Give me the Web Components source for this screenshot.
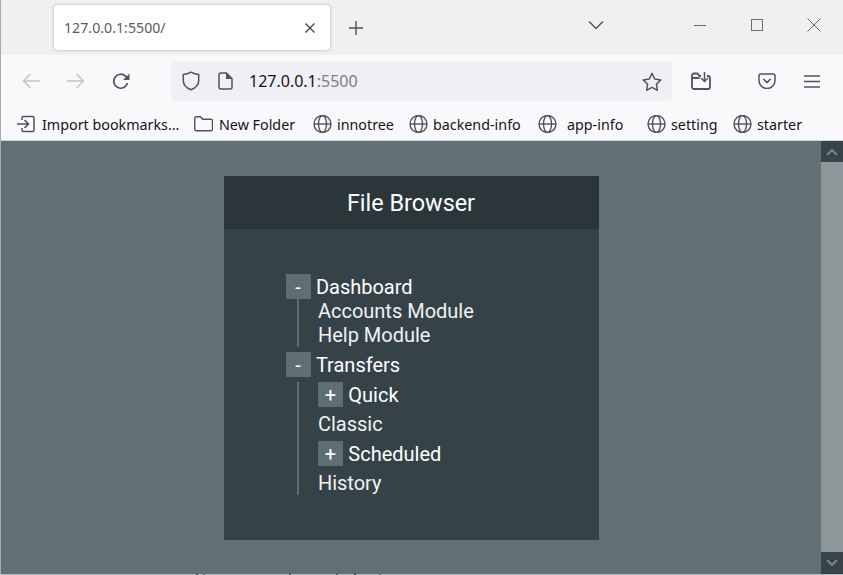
<!DOCTYPE html>
<html>
<head>
<meta charset="utf-8">
<title>File Browser</title>
<style>
  html, body { margin: 0; height: 100%; overflow: hidden; }
  body { font-family: "Noto Sans", sans-serif; }
</style>
</head>
<body>
<browser-window>
  <tab-strip slot="chrome" title-text="127.0.0.1:5500/"></tab-strip>
  <nav-bar slot="chrome" host-text="127.0.0.1" port-text=":5500"></nav-bar>
  <bookmark-bar slot="chrome">
    <bookmark-item icon="import" width="177" gap="6" label="Import bookmarks..."></bookmark-item>
    <bookmark-item icon="folder" width="119" gap="6" label="New Folder"></bookmark-item>
    <bookmark-item icon="globe" width="96" label="innotree"></bookmark-item>
    <bookmark-item icon="globe" width="129" label="backend-info"></bookmark-item>
    <bookmark-item icon="globe" width="109" gap="10" label="app-info"></bookmark-item>
    <bookmark-item icon="globe" width="86" label="setting"></bookmark-item>
    <bookmark-item icon="globe" width="67" label="starter"></bookmark-item>
  </bookmark-bar>
  <file-browser heading="File Browser">
    <tree-node label="Dashboard" sign="-">
      <tree-leaf>Accounts Module</tree-leaf>
      <tree-leaf>Help Module</tree-leaf>
    </tree-node>
    <tree-node label="Transfers" sign="-" spaced>
      <tree-node label="Quick" sign="+" closed></tree-node>
      <tree-leaf>Classic</tree-leaf>
      <tree-node label="Scheduled" sign="+" closed></tree-node>
      <tree-leaf>History</tree-leaf>
    </tree-node>
  </file-browser>
</browser-window>

<script>
const ICONS = {
  import: '<path d="M0 9h11M7.500 5 11.500 9 7.500 13" fill="none" stroke="#52525e" stroke-width="1.700"/><path d="M5 5V3A1.500 1.500 0 0 1 6.500 1.500h9A1.500 1.500 0 0 1 17 3v12a1.500 1.500 0 0 1-1.500 1.500h-9A1.500 1.500 0 0 1 5 15V13" fill="none" stroke="#52525e" stroke-width="1.500"/>',
  folder: '<path d="M.700 14v-10.500A1.800 1.800 0 0 1 2.500 1.700h4l2.200 2.500h8a1.800 1.800 0 0 1 1.800 1.800v8a1.800 1.800 0 0 1-1.800 1.800H2.500A1.800 1.800 0 0 1 .700 14z" fill="none" stroke="#52525e" stroke-width="1.400"/>',
  globe: '<g fill="none" stroke="#52525e" stroke-width="1.400"><circle cx="9.500" cy="9" r="8.500"/><ellipse cx="9.500" cy="9" rx="4" ry="8.500"/><path d="M1 9h17"/></g>'
}

class BrowserWindow extends HTMLElement {
  constructor() {
    super()
    this.attachShadow({ mode: 'open' })
    this.shadowRoot.innerHTML = `
      <style>
        :host {
          display: flex;
          flex-direction: column;
          width: 843px;
          height: 575px;
          box-sizing: border-box;
          border-left: 1px solid #a9a9a9;
          background: #f9f9fb;
        }
        .page {
          flex: 1;
          display: flex;
          min-height: 0;
          border-top: 1px solid #d4d4d8;
        }
        .view {
          flex: 1;
          display: flex;
          flex-direction: column;
          align-items: center;
          padding-top: 35px;
          background: #607074;
        }
        .bar {
          width: 22px;
          display: flex;
          flex-direction: column;
          background: #8e989a;
        }
        .arrow {
          height: 21px;
          background: #37444a;
          display: flex;
          align-items: center;
          justify-content: center;
        }
        .arrow.down { height: 22px; margin-top: auto; }
        .crumbs {
          height: 1px;
          background-color: #b5bbbc;
          background-image:
            linear-gradient(#3f3a6e, #3f3a6e), linear-gradient(#8a6a3a, #8a6a3a),
            linear-gradient(#4a4aa8, #4a4aa8), linear-gradient(#4a4aa8, #4a4aa8),
            linear-gradient(#333, #333), linear-gradient(#8a6a3a, #8a6a3a);
          background-repeat: no-repeat;
          background-size: 2px 1px;
          background-position: 195px 0, 202px 0, 288px 0, 335px 0, 353px 0, 378px 0;
        }
      </style>
      <slot name="chrome"></slot>
      <div class="page">
        <div class="view"><slot></slot></div>
        <div class="bar">
          <div class="arrow"><svg width="12" height="8"><path d="M1 7l5-5 5 5" fill="none" stroke="#77838a" stroke-width="2.200"/></svg></div>
          <div class="arrow down"><svg width="12" height="8"><path d="M1 1l5 5 5-5" fill="none" stroke="#77838a" stroke-width="2.200"/></svg></div>
        </div>
      </div>
      <div class="crumbs"></div>
    `
  }
}

class TabStrip extends HTMLElement {
  constructor() {
    super()
    this.attachShadow({ mode: 'open' })
  }

  connectedCallback() {
    this.shadowRoot.innerHTML = `
      <style>
        :host {
          display: flex;
          height: 55px;
          box-sizing: border-box;
          padding: 5px 0 5px 53px;
          background: #f0f0f0;
          color: #5b5b66;
        }
        .tab {
          width: 276px;
          height: 45px;
          box-sizing: border-box;
          padding: 0 14px 0 10px;
          display: flex;
          align-items: center;
          justify-content: space-between;
          background: #fff;
          border-radius: 4px;
          box-shadow: 0 0 3px rgba(0, 0, 0, .3);
          font-size: 14.200px;
        }
        svg { display: block; flex: none; }
        .plus { margin: 15px 0 0 18px; }
        .right {
          margin-left: auto;
          display: flex;
          align-items: center;
          height: 45px;
        }
      </style>
      <div class="tab">
        <span>${this.getAttribute('title-text')}</span>
        <svg width="12" height="12"><path d="M1.500 1.500l9 9M10.500 1.500l-9 9" stroke="#3f3f48" stroke-width="1.300"/></svg>
      </div>
      <svg class="plus" width="16" height="16"><path d="M8 1v14M1 8h14" stroke="#52525e" stroke-width="1.400"/></svg>
      <div class="right">
        <svg width="16" height="10" style="margin-right:90px;margin-bottom:5px"><path d="M1 1.500l7 7 7-7" fill="none" stroke="#52525e" stroke-width="1.500"/></svg>
        <svg width="12" height="12" style="margin-right:45px;margin-bottom:5px"><path d="M0 6.500h12" stroke="#6b6b6b"/></svg>
        <svg width="12" height="12" style="margin-right:44px;margin-bottom:5px"><rect x=".5" y=".5" width="11" height="11" fill="none" stroke="#6b6b6b"/></svg>
        <svg width="14" height="14" style="margin-right:22px;margin-bottom:5px"><path d="M.500.500l13 13M13.500.500l-13 13" stroke="#6b6b6b"/></svg>
      </div>
    `
  }
}

class NavBar extends HTMLElement {
  constructor() {
    super()
    this.attachShadow({ mode: 'open' })
  }

  connectedCallback() {
    this.shadowRoot.innerHTML = `
      <style>
        :host {
          display: flex;
          align-items: center;
          height: 55px;
          box-sizing: border-box;
          padding: 0 0 3px 21px;
          background: #f9f9fb;
        }
        svg { display: block; flex: none; }
        .url {
          width: 501px;
          height: 40px;
          margin: 0 19px 0 41px;
          padding: 0 10px 0 11px;
          box-sizing: border-box;
          display: flex;
          align-items: center;
          background: #f0f0f4;
          border-radius: 4px;
          font-size: 16px;
          color: #15141a;
        }
        .url span span { color: #7d7d85; }
        .star { margin-left: auto; }
      </style>
      <svg width="18" height="16" style="margin-right:27px"><path d="M18 8H1.500M8.500 1l-7 7 7 7" fill="none" stroke="#c2c2c7" stroke-width="1.400"/></svg>
      <svg width="18" height="16" style="margin-right:27px"><path d="M0 8h16.500M9.500 1l7 7-7 7" fill="none" stroke="#c2c2c7" stroke-width="1.400"/></svg>
      <svg width="18" height="18"><path d="M15.500 11a7 7 0 1 1-1.800-6.700L16.500 7" fill="none" stroke="#52525e" stroke-width="1.700"/><path d="M17.500 1.500V8H11z" fill="#52525e"/></svg>
      <div class="url">
        <svg width="18" height="20" style="margin-right:18px"><path d="M9 1.200C6.500 2.700 4 3.300 1.300 3.500v6c0 4 3 7.500 7.700 9.300 4.700-1.800 7.700-5.300 7.700-9.300v-6C14 3.300 11.500 2.700 9 1.200z" fill="none" stroke="#52525e" stroke-width="1.500"/></svg>
        <svg width="15" height="18" style="margin-right:16px"><path d="M1 3a2 2 0 0 1 2-2h5.500L14 6.500V15a2 2 0 0 1-2 2H3a2 2 0 0 1-2-2z" fill="none" stroke="#52525e" stroke-width="1.500"/><path d="M8 1v6h6z" fill="#52525e"/></svg>
        <span>${this.getAttribute('host-text')}<span>${this.getAttribute('port-text')}</span></span>
        <svg class="star" width="20" height="19"><path d="M10 1.300l2.700 5.700 6.100.9-4.400 4.300 1 6.100L10 15.400l-5.400 2.900 1-6.100-4.400-4.300 6.100-.9z" fill="none" stroke="#52525e" stroke-width="1.500" stroke-linejoin="round"/></svg>
      </div>
      <svg width="20" height="18" style="margin-right:47px"><path d="M1 15V3.500a2 2 0 0 1 2-2h3.500l2 2.500H10M1 6h7.500" fill="none" stroke="#52525e" stroke-width="1.800"/><path d="M13.500 0v9.500M10 6l3.500 3.500L17 6" fill="none" stroke="#52525e" stroke-width="1.500"/><path d="M16 4h1a2 2 0 0 1 2 2v9a2 2 0 0 1-2 2H3a2 2 0 0 1-2-2" fill="none" stroke="#52525e" stroke-width="1.800"/></svg>
      <svg width="18" height="16" style="margin-right:28px"><path d="M1 3A2 2 0 0 1 3 1h12a2 2 0 0 1 2 2v4.500a8 8 0 0 1-16 0z" fill="none" stroke="#52525e" stroke-width="1.500"/><path d="M5.500 6L9 9.500 12.500 6" fill="none" stroke="#52525e" stroke-width="1.700"/></svg>
      <svg width="16" height="13"><path d="M0 1h16M0 6.500h16M0 12h16" stroke="#52525e" stroke-width="1.500"/></svg>
    `
  }
}

class BookmarkBar extends HTMLElement {
  constructor() {
    super()
    this.attachShadow({ mode: 'open' })
    this.shadowRoot.innerHTML = `
      <style>
        :host {
          display: flex;
          align-items: center;
          height: 30px;
          box-sizing: border-box;
          padding: 0 0 2px 16px;
          background: #f9f9fb;
          font-size: 14.300px;
          color: #15141a;
        }
      </style>
      <slot></slot>
    `
  }
}

class BookmarkItem extends HTMLElement {
  constructor() {
    super()
    this.attachShadow({ mode: 'open' })
  }

  connectedCallback() {
    const gap = this.getAttribute('gap') || 5
    this.style.width = this.getAttribute('width') + 'px'
    this.shadowRoot.innerHTML = `
      <style>
        :host {
          display: flex;
          align-items: center;
          flex: none;
          white-space: nowrap;
        }
        svg { display: block; flex: none; margin-right: ${gap}px; }
      </style>
      <svg width="19" height="18">${ICONS[this.getAttribute('icon')]}</svg>
      <span>${this.getAttribute('label')}</span>
    `
  }
}

class FileBrowser extends HTMLElement {
  constructor() {
    super()
    this.attachShadow({ mode: 'open' })
  }

  connectedCallback() {
    this.shadowRoot.innerHTML = `
      <style>
        :host {
          display: block;
          width: 375px;
          height: 364px;
          background: #354248;
          font-family: Roboto, sans-serif;
          color: #fff;
        }
        h1 {
          margin: 0;
          height: 53px;
          line-height: 55px;
          text-align: center;
          font-size: 23.400px;
          font-weight: 400;
          background: #2b363b;
        }
        .tree {
          display: flex;
          flex-direction: column;
          gap: 5px;
          padding: 45px 0 0 62px;
        }
      </style>
      <h1>${this.getAttribute('heading')}</h1>
      <div class="tree"><slot></slot></div>
    `
  }
}

class TreeNode extends HTMLElement {
  constructor() {
    super()
    this.attachShadow({ mode: 'open' })
  }

  connectedCallback() {
    this.shadowRoot.innerHTML = `
      <style>
        :host {
          display: block;
          font-size: 20px;
          line-height: 24px;
        }
        .row {
          display: flex;
          align-items: center;
          gap: 5.400px;
          height: 25px;
        }
        .sign {
          width: 25px;
          height: 25px;
          display: flex;
          align-items: center;
          justify-content: center;
          background: #5f6e72;
        }
        .kids {
          display: flex;
          flex-direction: column;
          margin-left: 11px;
          padding-left: 19.400px;
          border-left: 2px solid #5f6e72;
        }
        :host([spaced]) .kids { gap: 5px; margin-top: 5px; }
        :host([closed]) .kids { display: none; }
      </style>
      <div class="row">
        <span class="sign">${this.getAttribute('sign')}</span>
        <span>${this.getAttribute('label')}</span>
      </div>
      <div class="kids"><slot></slot></div>
    `
  }
}

class TreeLeaf extends HTMLElement {
  constructor() {
    super()
    this.attachShadow({ mode: 'open' })
    this.shadowRoot.innerHTML = `
      <style>
        :host {
          display: block;
          height: 24px;
          font-size: 20px;
          line-height: 24px;
          color: #f0f2f2;
        }
      </style>
      <slot></slot>
    `
  }
}

customElements.define('browser-window', BrowserWindow)
customElements.define('tab-strip', TabStrip)
customElements.define('nav-bar', NavBar)
customElements.define('bookmark-bar', BookmarkBar)
customElements.define('bookmark-item', BookmarkItem)
customElements.define('file-browser', FileBrowser)
customElements.define('tree-node', TreeNode)
customElements.define('tree-leaf', TreeLeaf)
</script>
</body>
</html>
